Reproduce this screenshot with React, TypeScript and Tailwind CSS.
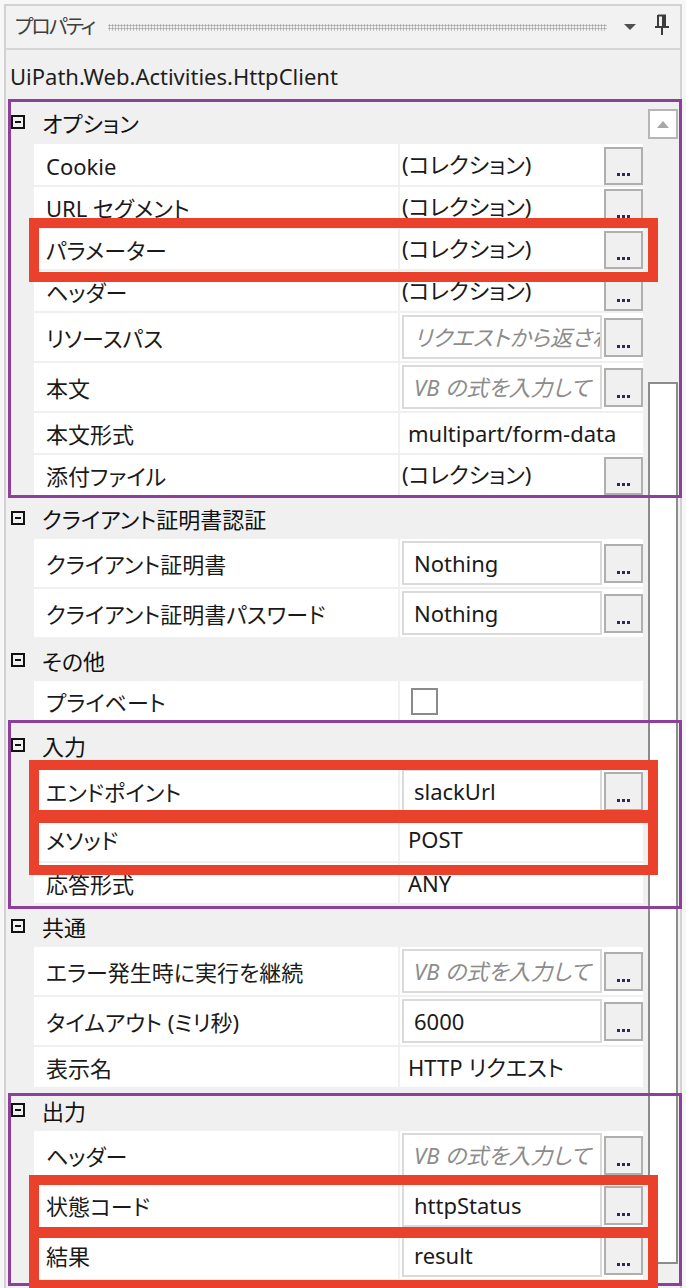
import React from "react";

type Row = {
  label: string;
  kind: "collection" | "input" | "plain" | "checkbox";
  value?: string;
  placeholder?: string;
  h: string;
};

type Section = { title: string; h: string; rows: Row[] };

const sections: Section[] = [
  {
    title: "オプション",
    h: "h-[44px]",
    rows: [
      { label: "Cookie", kind: "collection", value: "(コレクション)", h: "h-[43px]" },
      { label: "URL セグメント", kind: "collection", value: "(コレクション)", h: "h-[42px]" },
      { label: "パラメーター", kind: "collection", value: "(コレクション)", h: "h-[42px]" },
      { label: "ヘッダー", kind: "collection", value: "(コレクション)", h: "h-[42px]" },
      { label: "リソースパス", kind: "input", placeholder: "リクエストから返される値", h: "h-[50px]" },
      { label: "本文", kind: "input", placeholder: "VB の式を入力して", h: "h-[50px]" },
      { label: "本文形式", kind: "plain", value: "multipart/form-data", h: "h-[42px]" },
      { label: "添付ファイル", kind: "collection", value: "(コレクション)", h: "h-[42px]" },
    ],
  },
  {
    title: "クライアント証明書認証",
    h: "h-[42px]",
    rows: [
      { label: "クライアント証明書", kind: "input", value: "Nothing", h: "h-[50px]" },
      { label: "クライアント証明書パスワード", kind: "input", value: "Nothing", h: "h-[50px]" },
    ],
  },
  {
    title: "その他",
    h: "h-[42px]",
    rows: [{ label: "プライベート", kind: "checkbox", h: "h-[42px]" }],
  },
  {
    title: "入力",
    h: "h-[44px]",
    rows: [
      { label: "エンドポイント", kind: "input", value: "slackUrl", h: "h-[50px]" },
      { label: "メソッド", kind: "plain", value: "POST", h: "h-[46px]" },
      { label: "応答形式", kind: "plain", value: "ANY", h: "h-[42px]" },
    ],
  },
  {
    title: "共通",
    h: "h-[42px]",
    rows: [
      { label: "エラー発生時に実行を継続", kind: "input", placeholder: "VB の式を入力して", h: "h-[50px]" },
      { label: "タイムアウト (ミリ秒)", kind: "input", value: "6000", h: "h-[50px]" },
      { label: "表示名", kind: "plain", value: "HTTP リクエスト", h: "h-[42px]" },
    ],
  },
  {
    title: "出力",
    h: "h-[42px]",
    rows: [
      { label: "ヘッダー", kind: "input", placeholder: "VB の式を入力して", h: "h-[50px]" },
      { label: "状態コード", kind: "input", value: "httpStatus", h: "h-[50px]" },
      { label: "結果", kind: "input", value: "result", h: "h-[50px]" },
    ],
  },
];

function DotsButton({ h }: { h: string }) {
  return (
    <div
      className={`w-[39px] ${h} shrink-0 border-2 border-[#afafaf] bg-[#f0f0f0] flex items-end justify-center pb-[7px]`}
    >
      <div className="flex gap-[2px]">
        <span className="block w-[3px] h-[3px] bg-[#2b2b5a]" />
        <span className="block w-[3px] h-[3px] bg-[#2b2b5a]" />
        <span className="block w-[3px] h-[3px] bg-[#2b2b5a]" />
      </div>
    </div>
  );
}

function Value({ row }: { row: Row }) {
  if (row.kind === "collection") {
    return (
      <div className="flex-1 flex items-center h-full">
        <div className="flex-1 pl-[2px] pb-[2px] text-[#1a1a1a] whitespace-nowrap">{row.value}</div>
        <div className="self-end">
          <DotsButton h="h-[38px]" />
        </div>
      </div>
    );
  }
  if (row.kind === "input") {
    return (
      <div className="flex-1 flex items-center h-full pl-[2px] gap-[2px]">
        <div className="w-[200px] h-[44px] shrink-0 border-2 border-[#dadada] bg-white flex items-center pl-[10px] overflow-hidden">
          {row.placeholder ? (
            <span className="italic text-[#8c8c8c] whitespace-nowrap">{row.placeholder}</span>
          ) : (
            <span className="text-[#1a1a1a] whitespace-nowrap">{row.value}</span>
          )}
        </div>
        <DotsButton h="h-[39px]" />
      </div>
    );
  }
  if (row.kind === "checkbox") {
    return (
      <div className="flex-1 flex items-center h-full pl-[11px]">
        <div className="w-[27px] h-[27px] border-2 border-[#8a8a8a] bg-white" />
      </div>
    );
  }
  return (
    <div className="flex-1 flex items-center h-full pl-[8px] text-[#1a1a1a] whitespace-nowrap">
      {row.value}
    </div>
  );
}

function CollapseIcon() {
  return (
    <div className="w-[14px] h-[14px] border-2 border-[#111] flex items-center justify-center shrink-0">
      <div className="w-[6px] h-[2px] bg-[#111]" />
    </div>
  );
}

export default function App() {
  return (
    <div className="relative w-[686px] h-[1288px] overflow-hidden bg-[#f7f7f7] font-['Noto_Sans','Noto_Sans_CJK_JP',sans-serif] [font-feature-settings:'palt'] text-[22px] leading-none">
      <div className="ml-[4px] mt-[4px] w-[678px] h-[1290px] border-2 border-[#d2d2d2] bg-[#f0f0f0] flex flex-col">
        {/* Title bar */}
        <div className="h-[44px] shrink-0 flex items-center pl-[9px] pr-[10px] border-b-2 border-[#d6d6d6] bg-[#f2f2f2]">
          <span className="shrink-0 whitespace-nowrap text-[#404040] text-[20px] tracking-[-2px]">プロパティ</span>
          <div className="ml-[14px] flex-1 h-[7px] bg-[radial-gradient(circle,#a3a3a3_0.9px,transparent_1.2px)] bg-[length:3px_3px]" />
          <svg className="ml-[16px] shrink-0" width="14" height="8" viewBox="0 0 14 8">
            <path d="M1 1 H13 L7 7 Z" fill="#505050" />
          </svg>
          <svg className="ml-[17px] mb-[4px] shrink-0" width="16" height="22" viewBox="0 0 16 22">
            <path d="M4 1.5 H11 V12" fill="none" stroke="#3c3c3c" strokeWidth="2" />
            <path d="M4 1 V12" stroke="#3c3c3c" strokeWidth="2" />
            <path d="M9 2 V12" stroke="#3c3c3c" strokeWidth="2" />
            <path d="M1 13 H15" stroke="#3c3c3c" strokeWidth="2" />
            <path d="M8 13 V21" stroke="#3c3c3c" strokeWidth="2" />
          </svg>
        </div>
        {/* Description */}
        <div className="h-[50px] shrink-0 flex items-center pl-[4px] text-[#1e1e1e]">
          <span className="pt-[2px]">UiPath.Web.Activities.HttpClient</span>
        </div>
        {/* Body */}
        <div className="flex flex-1">
          <div className="w-[637px] flex flex-col">
            {sections.map((s) => (
              <div key={s.title} className="flex flex-col">
                <div className={`${s.h} flex items-center pl-[5px] gap-[17px]`}>
                  <CollapseIcon />
                  <span className="text-[#111] pt-[2px]">{s.title}</span>
                </div>
                {s.rows.map((r, i) => (
                  <div key={s.title + i} className={`${r.h} pl-[28px] pb-[2px] flex`}>
                    <div className="flex-1 flex bg-white">
                      <div className="w-[364px] shrink-0 flex items-center pl-[12px] pt-[2px] text-[#1a1a1a] whitespace-nowrap">
                        {r.label}
                      </div>
                      <div className="w-[2px] bg-[#f0f0f0]" />
                      <Value row={r} />
                    </div>
                  </div>
                ))}
              </div>
            ))}
          </div>
          {/* Scrollbar */}
          <div className="w-[37px] flex flex-col pl-[5px]">
            <div className="mt-[9px] w-[30px] h-[30px] border-2 border-[#b5b5b5] bg-white flex items-center justify-center">
              <svg width="12" height="7" viewBox="0 0 12 7">
                <path d="M6 0 L12 7 H0 Z" fill="#a8a8a8" />
              </svg>
            </div>
            <div className="mt-[243px] w-[30px] h-[882px] border-2 border-[#8c8c8c] bg-white" />
          </div>
        </div>
      </div>

      {/* Annotation overlays */}
      <div className="absolute left-[8px] top-[99px] w-[674px] h-[399px] border-[3px] border-[#8e3f9c]" />
      <div className="absolute left-[8px] top-[720px] w-[674px] h-[189px] border-[3px] border-[#8e3f9c]" />
      <div className="absolute left-[8px] top-[1093px] w-[674px] h-[193px] border-[3px] border-[#8e3f9c]" />

      <div className="absolute left-[29px] top-[218px] w-[629px] h-[64px] border-[10px] border-[#e9412b]" />
      <div className="absolute left-[29px] top-[760px] w-[629px] h-[60px] border-[10px] border-[#e9412b]" />
      <div className="absolute left-[29px] top-[813px] w-[629px] h-[62px] border-[10px] border-[#e9412b]" />
      <div className="absolute left-[29px] top-[1175px] w-[629px] h-[62px] border-[10px] border-[#e9412b]" />
      <div className="absolute left-[29px] top-[1228px] w-[629px] h-[62px] border-[10px] border-[#e9412b]" />
    </div>
  );
}
